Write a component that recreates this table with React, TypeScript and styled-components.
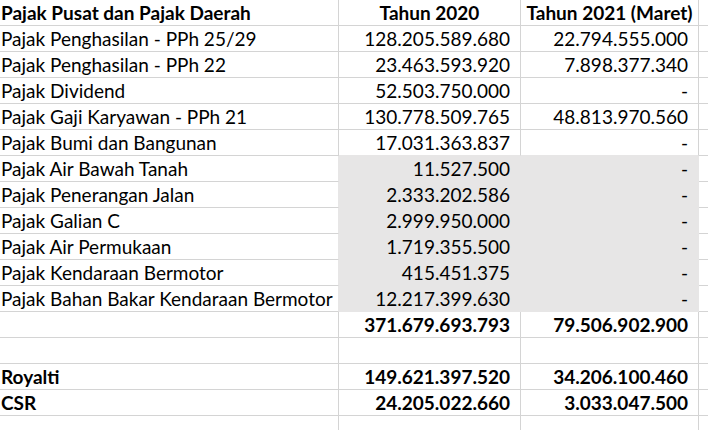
import * as React from 'react'
import styled, { createGlobalStyle } from 'styled-components'

const GlobalStyle = createGlobalStyle`
  html, body {
    margin: 0;
    padding: 0;
    background: #ffffff;
  }
  body {
    width: 708px;
    height: 430px;
    overflow: hidden;
    font-family: Lato, 'Open Sans', sans-serif;
    color: #000000;
  }
`

const GRID = '#d4d4d4'
const FILL = '#e7e6e6'

const Sheet = styled.table`
  border-collapse: separate;
  border-spacing: 0;
  table-layout: fixed;
  width: 728px;
`

const Row = styled.tr`
  height: 26px;
`

const Cell = styled.td<{
  $align?: 'left' | 'right' | 'center'
  $bold?: boolean
  $fill?: boolean
  $joinRight?: boolean
  $joinBottom?: boolean
}>`
  box-sizing: border-box;
  height: 26px;
  padding: 0 10px 0 1px;
  vertical-align: bottom;
  white-space: nowrap;
  overflow: visible;
  font-size: 19px;
  line-height: 24px;
  font-weight: ${(p) => (p.$bold ? 700 : 400)};
  text-align: ${(p) => p.$align ?? 'left'};
  background: ${(p) => (p.$fill ? FILL : 'transparent')};
  border-right: 1px solid ${(p) => (p.$fill || p.$joinRight ? FILL : GRID)};
  border-bottom: 1px solid ${(p) => (p.$fill || p.$joinBottom ? FILL : GRID)};
`

const HeadCell = styled(Cell)`
  padding: 0 1px;
  text-align: center;
`

type Line = {
  label: string
  y2020?: string
  y2021?: string
  bold?: boolean
  fill?: boolean
  edge?: boolean
}

const lines: Line[] = [
  { label: 'Pajak Penghasilan - PPh 25/29', y2020: '128.205.589.680', y2021: '22.794.555.000' },
  { label: 'Pajak Penghasilan - PPh 22', y2020: '23.463.593.920', y2021: '7.898.377.340' },
  { label: 'Pajak Dividend', y2020: '52.503.750.000', y2021: '-' },
  { label: 'Pajak Gaji Karyawan - PPh 21', y2020: '130.778.509.765', y2021: '48.813.970.560' },
  { label: 'Pajak Bumi dan Bangunan', y2020: '17.031.363.837', y2021: '-', edge: true },
  { label: 'Pajak Air Bawah Tanah', y2020: '11.527.500', y2021: '-', fill: true },
  { label: 'Pajak Penerangan Jalan', y2020: '2.333.202.586', y2021: '-', fill: true },
  { label: 'Pajak Galian C', y2020: '2.999.950.000', y2021: '-', fill: true },
  { label: 'Pajak Air Permukaan', y2020: '1.719.355.500', y2021: '-', fill: true },
  { label: 'Pajak Kendaraan Bermotor', y2020: '415.451.375', y2021: '-', fill: true },
  { label: 'Pajak Bahan Bakar Kendaraan Bermotor', y2020: '12.217.399.630', y2021: '-', fill: true },
  { label: '', y2020: '371.679.693.793', y2021: '79.506.902.900', bold: true },
  { label: '' },
  { label: 'Royalti', y2020: '149.621.397.520', y2021: '34.206.100.460', bold: true },
  { label: 'CSR', y2020: '24.205.022.660', y2021: '3.033.047.500', bold: true },
  { label: '' },
]

const App = () => {
  return (
    <>
      <GlobalStyle />
      <Sheet>
        <colgroup>
          <col style={{ width: 339 }} />
          <col style={{ width: 182 }} />
          <col style={{ width: 178 }} />
          <col style={{ width: 29 }} />
        </colgroup>
        <tbody>
          <Row>
            <Cell $bold>Pajak Pusat dan Pajak Daerah</Cell>
            <HeadCell $bold>Tahun 2020</HeadCell>
            <HeadCell $bold>Tahun 2021 (Maret)</HeadCell>
            <Cell />
          </Row>
          {lines.map((l, i) => (
            <Row key={i}>
              <Cell $bold={l.bold} $joinRight={l.fill}>
                {l.label}
              </Cell>
              <Cell $align="right" $bold={l.bold} $fill={l.fill} $joinBottom={l.edge}>
                {l.y2020}
              </Cell>
              <Cell $align="right" $bold={l.bold} $fill={l.fill} $joinBottom={l.edge}>
                {l.y2021}
              </Cell>
              <Cell />
            </Row>
          ))}
        </tbody>
      </Sheet>
    </>
  )
}

export default App
